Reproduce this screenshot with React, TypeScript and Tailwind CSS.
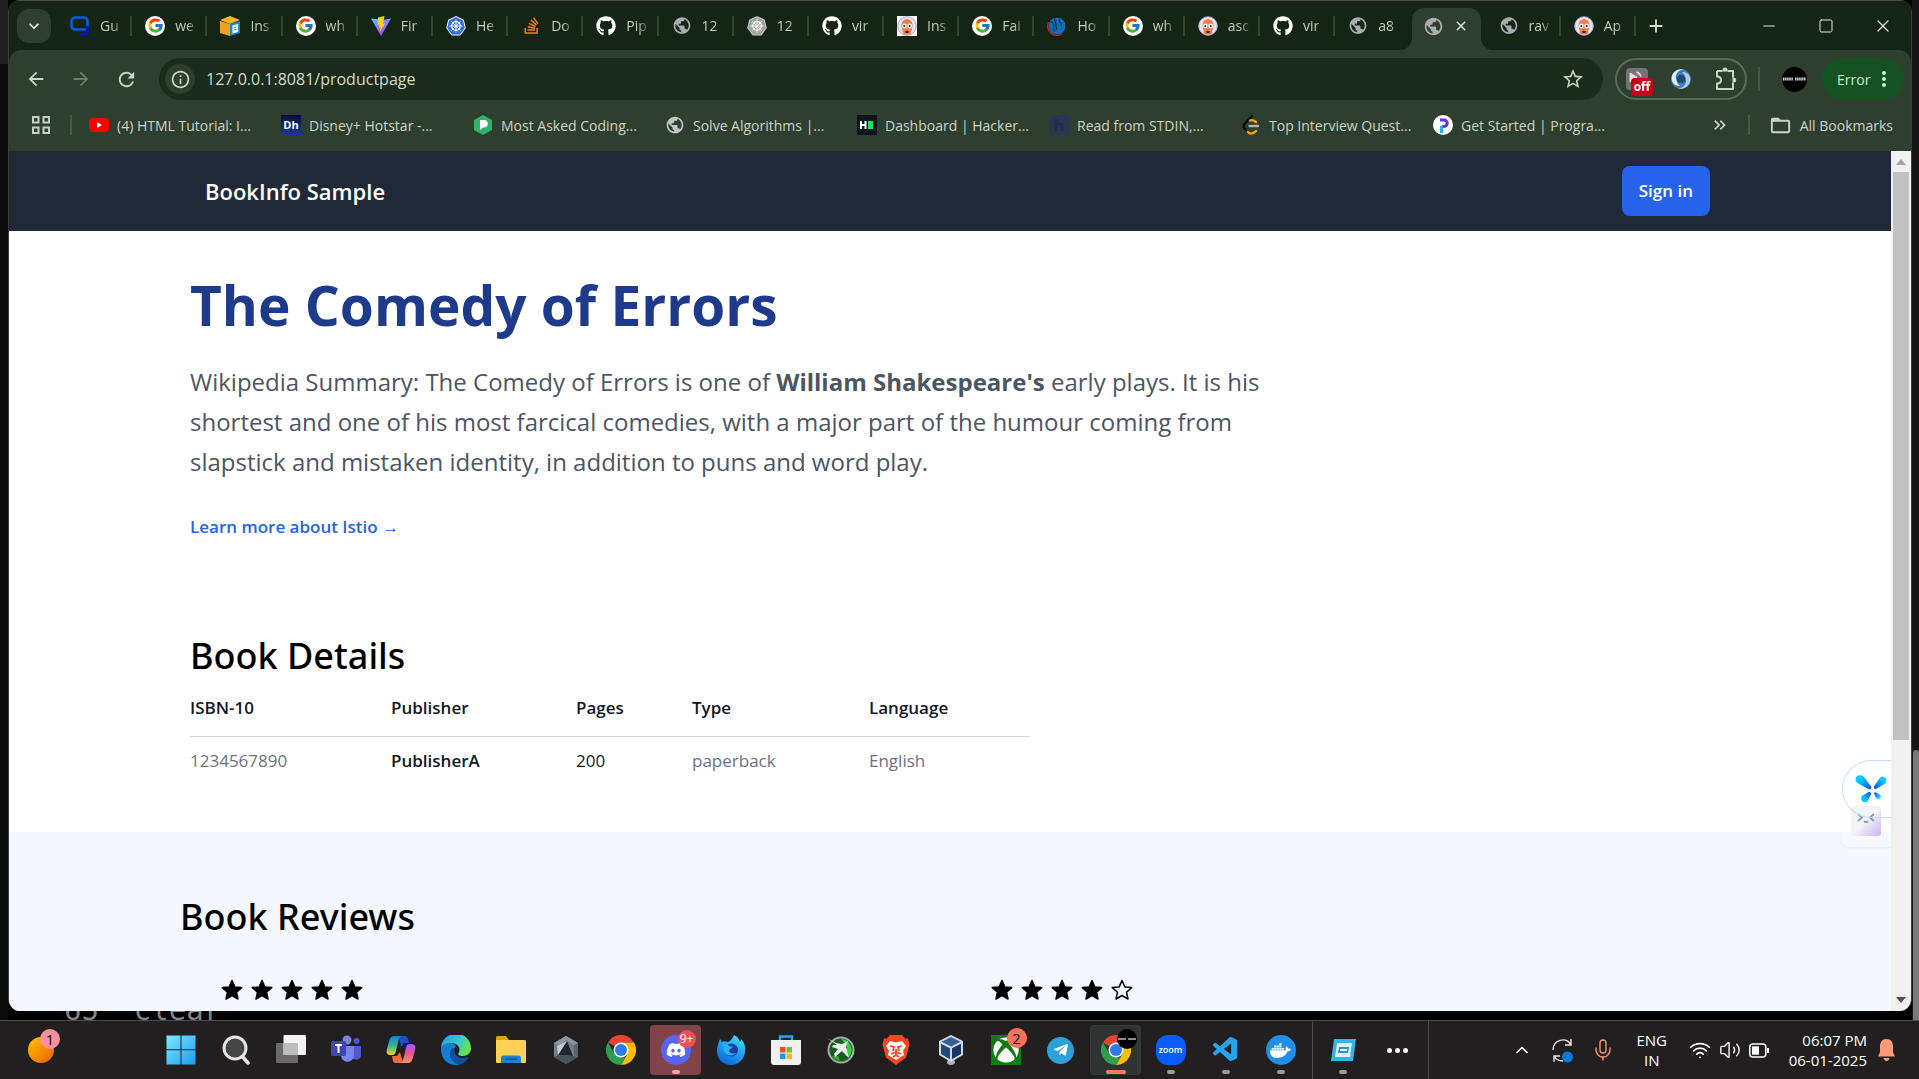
import React, { useId } from 'react';
import { FcGoogle } from 'react-icons/fc';
import { FaGithub, FaStackOverflow, FaDiscord, FaXbox, FaTelegramPlane, FaDocker } from 'react-icons/fa';
import { VscVscode } from 'react-icons/vsc';
import {
  MdPublic, MdArrowBack, MdArrowForward, MdRefresh, MdInfoOutline, MdStarBorder, MdMoreVert,
  MdFolderOpen, MdClose, MdAdd, MdKeyboardArrowDown, MdKeyboardDoubleArrowRight,
} from 'react-icons/md';
import { Wifi, Volume2, Mic, ChevronUp, Minus, Square, X } from 'lucide-react';

type IconFn = () => React.ReactElement;

/* ---------- favicons ---------- */
const Google: IconFn = () => (
  <span className="flex size-5 items-center justify-center rounded-full bg-white"><FcGoogle size={17} /></span>
);
const Github: IconFn = () => <FaGithub size={20} color="#fff" />;
const Globe: IconFn = () => <MdPublic size={21} color="#a9adb0" />;
const Gfg: IconFn = () => (
  <svg width="20" height="20" viewBox="0 0 20 20" fill="none">
    <path d="M17.500 12V5.500C17.500 3 16.500 1.500 14 1.500H5.500C3 1.500 1.500 3 1.500 5.500V10C1.500 12.500 3 13.500 5.500 13.500H16" stroke="#0b5be0" strokeWidth="2.600" />
    <path d="M17.500 10V15C17.500 17.500 16.500 18.500 15 18.500H10" stroke="#0713c8" strokeWidth="2.600" />
  </svg>
);
const Cube: IconFn = () => (
  <svg width="20" height="20" viewBox="0 0 20 20">
    <path d="M0 4 10 0l10 4-10 4z" fill="#f7b32b" />
    <path d="M0 5l10 3v12L0 17z" fill="#eda31e" />
    <path d="M10 8l10-3v12l-10 3z" fill="#1b8ac4" />
    <path d="M12.500 9.500l5.500-1.500v8l-5.500 1.500z" fill="#fff" />
    <path d="M14 11.500l2.500-.6M14 14l2.500-.6" stroke="#1b8ac4" />
  </svg>
);
const Vite: IconFn = () => {
  const id = useId();
  return (
    <svg width="20" height="20" viewBox="0 0 20 20">
      <defs>
        <linearGradient id={id} x1="0" y1="0" x2=".6" y2="1"><stop stopColor="#41d1ff" /><stop offset="1" stopColor="#bd34fe" /></linearGradient>
      </defs>
      <path d="M0 2.500 10 20 20 2.500l-7.500 1.300z" fill={`url(#${id})`} />
      <path d="M13.500 0 7 1.400 6.500 9l2-.4-.6 3.200 1.700-.5-.9 4.700L14.300 7.300l-2.300.4z" fill="#ffcf24" />
    </svg>
  );
};
const KubeWheel = ({ rim, body }: { rim: string; body: string }) => (
  <svg width="20" height="20" viewBox="0 0 20 20">
    <path d="M10 0l7.800 3.700L19.800 12l-5.400 7.500H5.600L.2 12l2-8.300z" fill={rim} />
    <path d="M10 1l7 3.400L18.800 12l-4.900 6.600H6.100L1.200 12 3 4.400z" fill={body} />
    <circle cx="10" cy="10" r="4.300" fill="none" stroke="#fff" strokeWidth="1.200" />
    <path d="M10 3.500v13M3.500 10h13M5.400 5.400l9.200 9.200M14.600 5.400l-9.200 9.200" stroke="#fff" strokeWidth=".9" />
  </svg>
);
const Kube: IconFn = () => <KubeWheel rim="#fff" body="#326ce5" />;
const KubeGray: IconFn = () => <KubeWheel rim="#c8c8c8" body="#a2a2a2" />;
const Stack: IconFn = () => <FaStackOverflow size={19} color="#f48024" />;
const ArgoBody = ({ square }: { square?: boolean }) => (
  <svg width="20" height="20" viewBox="0 0 20 20">
    {square && <path d="M0 0h20v20H0z" fill="#fff" />}
    <circle cx="10" cy="10" r="9.300" fill="#e9e6f2" stroke="#a8a3cf" />
    <path d="M4.500 9a5.500 6 0 0 1 11 0c0 4-1.500 5.500-2 9.500h-7C6 14.500 4.500 13 4.500 9z" fill="#ef7b4d" />
    <circle cx="7.300" cy="10" r="2.400" fill="#fff" /><circle cx="12.700" cy="10" r="2.400" fill="#fff" />
    <circle cx="7.300" cy="10" r="1" fill="#222" /><circle cx="12.700" cy="10" r="1" fill="#222" />
    <path d="M8.500 15h3v2h-3z" fill="#2a1a18" />
  </svg>
);
const ArgoSq: IconFn = () => <ArgoBody square />;
const Argo: IconFn = () => <ArgoBody />;
const Helm: IconFn = () => (
  <svg width="20" height="20" viewBox="0 0 20 20">
    <circle cx="10" cy="10" r="9" fill="#0f6fb4" stroke="#101d28" strokeWidth="1" />
    <path d="M1.500 6.500A9.200 9.200 0 0 0 15 17.800" fill="none" stroke="#c5281f" strokeWidth="1.300" />
    <path d="M3 6c5-1 3 5 4 10M8 2c-2 4 2 4 1 8l1 4M13 3c-3 4 3 3 1 7" fill="none" stroke="#12344c" strokeWidth="1.200" />
  </svg>
);

const tabs: { icon: IconFn; label: string; active?: boolean }[] = [
  { icon: Gfg, label: 'Gu' }, { icon: Google, label: 'we' }, { icon: Cube, label: 'Ins' },
  { icon: Google, label: 'wh' }, { icon: Vite, label: 'Fir' }, { icon: Kube, label: 'He' },
  { icon: Stack, label: 'Do' }, { icon: Github, label: 'Pip' }, { icon: Globe, label: '12' },
  { icon: KubeGray, label: '12' }, { icon: Github, label: 'vir' }, { icon: ArgoSq, label: 'Ins' },
  { icon: Google, label: 'Fai' }, { icon: Helm, label: 'Ho' }, { icon: Google, label: 'wh' },
  { icon: Argo, label: 'asc' }, { icon: Github, label: 'vir' }, { icon: Globe, label: 'a8' },
  { icon: Globe, label: '', active: true }, { icon: Globe, label: 'rav' }, { icon: Argo, label: 'Ap' },
];

const Corner = ({ side }: { side: 'l' | 'r' }) => (
  <svg className={side === 'l' ? 'absolute bottom-0 -left-3' : 'absolute bottom-0 -right-3'} width="12" height="12" viewBox="0 0 12 12">
    <path d={side === 'l' ? 'M12 0v12H0A12 12 0 0 0 12 0z' : 'M0 0v12h12A12 12 0 0 1 0 0z'} fill="#2f3f2f" />
  </svg>
);

function TabStrip() {
  return (
    <div className="flex h-[50px] shrink-0 items-center border-t border-[#4a4a4a] bg-[#142415]">
      <button aria-label="Search tabs" className="ml-2 flex size-[34px] shrink-0 items-center justify-center rounded-xl bg-[#2f3f2f] text-white">
        <MdKeyboardArrowDown size={20} />
      </button>
      <div role="tablist" className="ml-[6px] flex h-full min-w-0 max-w-[1579px] flex-1">
        {tabs.map((t, i) => (
          <div key={i} role="presentation" className="relative flex min-w-0 flex-1 items-center">
            {t.active ? (
              <button role="tab" aria-selected aria-label="Product page" className="relative mt-[7px] mr-[5px] ml-[2px] flex h-[42px] min-w-0 flex-1 items-center justify-between self-start rounded-t-xl bg-[#2f3f2f] pr-3 pb-[6px] pl-[11px]">
                <Globe />
                <MdClose size={16} color="#e3ece0" />
                <Corner side="l" /><Corner side="r" />
              </button>
            ) : (
              <button role="tab" aria-selected={false} className="flex min-w-0 flex-1 items-center gap-[10px] pl-[13px] text-left">
                <span className="flex w-5 shrink-0 justify-center"><t.icon /></span>
                <span className="w-6 whitespace-nowrap text-[14px] leading-5 text-[#c2cfbc] [mask-image:linear-gradient(to_right,#000_50%,transparent)]">{t.label}</span>
              </button>
            )}
            {!t.active && !tabs[i + 1]?.active && <span className="absolute right-0 h-5 w-[2px] bg-[#34452f]" />}
          </div>
        ))}
      </div>
      <button aria-label="New tab" className="ml-[9px] text-[#c9dcc4]"><MdAdd size={22} /></button>
      <div className="ml-auto flex shrink-0 items-center text-[#e6e6e6]">
        <button aria-label="Minimize" className="flex w-[57px] justify-center"><Minus size={18} strokeWidth={1.5} /></button>
        <button aria-label="Maximize" className="flex w-[57px] justify-center"><Square size={16} strokeWidth={1.5} /></button>
        <button aria-label="Close" className="flex w-[57px] justify-center"><X size={20} strokeWidth={1.5} /></button>
      </div>
    </div>
  );
}

function AddressRow() {
  return (
    <div className="flex h-[58px] items-center pr-[7px] pl-4 text-[#c6d8c1]">
      <button aria-label="Back" className="flex w-[45px] shrink-0"><MdArrowBack size={22} /></button>
      <button aria-label="Forward" className="flex w-[45px] shrink-0 text-[#6c7d69]"><MdArrowForward size={22} /></button>
      <button aria-label="Reload" className="flex w-[44px] shrink-0"><MdRefresh size={23} /></button>
      <div className="flex h-[42px] min-w-0 flex-1 items-center rounded-full bg-[#1b2b1c] pr-[18px] pl-[6px]">
        <span className="flex size-[30px] shrink-0 items-center justify-center rounded-full bg-[#2f3f2f]"><MdInfoOutline size={21} /></span>
        <div className="relative ml-[11px] h-6 flex-1">
          <input aria-label="Address" defaultValue="127.0.0.1:8081/productpage" className="w-full bg-transparent text-[16px] leading-6 text-[#d3dccf] outline-none" />
        </div>
        <button aria-label="Bookmark this page"><MdStarBorder size={24} /></button>
      </div>
      <div className="ml-3 flex h-[42px] w-[132px] shrink-0 items-center justify-between rounded-full border-2 border-[#5d6a5a] pr-[7px] pl-[9px]">
        <button aria-label="Blocker, off" className="relative size-[22px] rounded-sm bg-[#737373]">
          <svg viewBox="0 0 22 22" className="size-[22px]"><path d="M4 5l7 4-7 5zM10 4c3 0 5 2 5 5" fill="#ddd" stroke="#ddd" /></svg>
          <span className="absolute top-[10px] left-[5px] h-[18px] w-[22px] rounded bg-[#c8001c] text-[12px] leading-[17px] font-bold text-white">off</span>
        </button>
        <button aria-label="Sync extension">
          <svg width="22" height="22" viewBox="0 0 22 22">
            <circle cx="11" cy="11" r="7" fill="none" stroke="#3d7cc0" strokeWidth="6" />
            <path d="M2 13C0 5 8-1 15 2 9 1 5 6 6 11c.5 3 2 5 4 7-4 0-7-2-8-5z" fill="#dcecf9" />
            <path d="M20 9c2 8-6 14-13 11 6 1 10-4 9-9-.5-3-2-5-4-7 4 0 7 2 8 5z" fill="#a9cdec" />
            <ellipse cx="11" cy="11" rx="3" ry="4" fill="#1f4a80" />
          </svg>
        </button>
        <button aria-label="Extensions">
          <svg width="24" height="26" viewBox="0 0 24 26" fill="none" stroke="#c6d8c1" strokeWidth="2" strokeLinejoin="round">
            <path d="M3 5h5.500M13.500 5H19v6.500M19 16.500V23H3v-5.500c2.500 0 4-1.500 4-3.500s-1.500-3.500-4-3.500V5" />
            <path d="M8.500 5.500V4a2.500 2.500 0 0 1 5 0v1.500zM18.500 11.500h1.200a2.500 2.500 0 0 1 0 5h-1.200z" fill="#c6d8c1" stroke="none" />
          </svg>
        </button>
      </div>
      <span className="ml-[11px] h-6 w-[2px] bg-[#46583f]" />
      <button aria-label="Profile" className="ml-[22px] flex size-[25px] shrink-0 items-center justify-center rounded-full bg-black"><svg width="23" height="4" viewBox="0 0 23 4"><path d="M0 2h10M12 2h11" stroke="#d5d5d5" strokeWidth="3" strokeDasharray="1.500 .6" /></svg></button>
      <button className="ml-[15px] flex h-[42px] w-[82px] shrink-0 items-center justify-between rounded-full bg-[#145223] pr-2 pl-[15px] text-[14px] text-[#cdeccb]">
        Error<MdMoreVert size={24} />
      </button>
    </div>
  );
}

const bookmarks: { label: string; icon: React.ReactElement }[] = [
  { label: '(4) HTML Tutorial: I...', icon: <svg width="20" height="20" viewBox="0 0 20 20"><rect y="3" width="20" height="14" rx="4" fill="#f00" /><path d="M8 7l5 3-5 3z" fill="#fff" /></svg> },
  { label: 'Disney+ Hotstar -...', icon: <span className="flex size-5 items-center justify-center bg-linear-to-b from-[#0a0d3d] to-[#1a3b92] text-[11px] font-bold text-white">Dh</span> },
  { label: 'Most Asked Coding...', icon: <svg width="18" height="20" viewBox="0 0 18 20"><path d="M9 0l9 5v10l-9 5-9-5V5z" fill="#2cb567" /><path d="M6 5h4a3.500 3.500 0 0 1 0 7.500H9L6 15z" fill="#fff" /></svg> },
  { label: 'Solve Algorithms |...', icon: <MdPublic size={20} color="#c0c6c4" /> },
  { label: 'Dashboard | Hacker...', icon: <svg width="20" height="20" viewBox="0 0 20 20"><path d="M0 0h20v20H0z" fill="#0e141e" /><path d="M4 6v8M8.500 6v8M4 10h4.500" stroke="#fff" strokeWidth="2" /><path d="M11 6h5v8h-5z" fill="#1be36a" /></svg> },
  { label: 'Read from STDIN,...', icon: <svg width="20" height="20" viewBox="0 0 20 20"><rect width="20" height="20" rx="2" fill="#2c3454" /><path d="M7 4v12M7 9h6v7" fill="none" stroke="#222a45" strokeWidth="2.500" /></svg> },
  { label: 'Top Interview Quest...', icon: <svg width="18" height="20" viewBox="0 0 18 20" fill="none" strokeWidth="2.400" strokeLinecap="round"><path d="M10 1 2.500 9c-1.500 2-1 3 0 4.500L6 17" stroke="#0a0a0a" /><path d="M6 17c2 2.500 5 2 8-1M8 5.500c2-1 4 0 6 1.500" stroke="#ffa116" /><path d="M7.500 11H16" stroke="#b3b3b3" /></svg> },
  { label: 'Get Started | Progra...', icon: <svg width="20" height="20" viewBox="0 0 20 20"><circle cx="10" cy="10" r="10" fill="#fff" /><path d="M7 5h4a3 3 0 0 1 0 6.500H9" fill="none" stroke="#6a2be8" strokeWidth="3" /><path d="M8.500 11v7" stroke="#1fb3f5" strokeWidth="3" /></svg> },
];

function BookmarkRow() {
  return (
    <div className="flex h-[43px] items-start pt-[6px] text-[14px] text-[#ccd3c8]">
      <div className="flex h-[22px] w-full items-center">
        <button aria-label="Apps" className="ml-[23px] shrink-0">
          <svg width="18" height="18" viewBox="0 0 18 18" fill="none" stroke="#c6cfc2" strokeWidth="2"><path d="M1 1h5.500v5.500H1zM11.500 1H17v5.500h-5.500zM1 11.500h5.500V17H1zM11.500 11.500H17V17h-5.500z" /></svg>
        </button>
        <span className="ml-5 h-5 w-[2px] shrink-0 bg-[#46583f]" />
        <nav aria-label="Bookmarks" className="ml-[17px] flex min-w-0 flex-1 overflow-hidden">
          {bookmarks.map((b) => (
            <a key={b.label} href="#bookmark" className="flex w-48 shrink-0 items-center gap-2 whitespace-nowrap">
              <span className="flex w-5 shrink-0 justify-center">{b.icon}</span>{b.label}
            </a>
          ))}
        </nav>
        <button aria-label="More bookmarks" className="shrink-0"><MdKeyboardDoubleArrowRight size={20} /></button>
        <span className="ml-[18px] h-5 w-[2px] shrink-0 bg-[#46583f]" />
        <button className="mr-[18px] ml-[19px] flex shrink-0 items-center gap-2"><MdFolderOpen size={23} />All Bookmarks</button>
      </div>
    </div>
  );
}

/* ---------- page ---------- */
const Stars = ({ count }: { count: number }) => (
  <div role="img" aria-label={`${count} of 5 stars`} className="flex gap-[6px]">
    {[0, 1, 2, 3, 4].map((n) => (
      <svg key={n} width="24" height="24" viewBox="0 0 24 24" fill={n < count ? '#000' : 'none'} stroke="#000" strokeWidth="1.500" strokeLinejoin="round">
        <path d="M12 2.500l2.800 6.400 6.900.7-5.200 4.600 1.500 6.800L12 17.500l-6 3.500 1.500-6.800-5.200-4.600 6.900-.7z" />
      </svg>
    ))}
  </div>
);

function ProductPage() {
  return (
    <main className="min-w-0 flex-1 overflow-hidden bg-white">
      <nav className="bg-[#1f2937]">
        <div className="mx-auto flex h-20 max-w-[1600px] items-center justify-between px-10">
          <a href="#home" className="pl-[15px] text-[22px] leading-7 font-semibold text-white">BookInfo Sample</a>
          <button className="h-[50px] rounded-lg bg-[#2563eb] px-[17px] text-[17px] font-semibold text-white">Sign in</button>
        </div>
      </nav>
      <section className="mx-auto max-w-[1600px] px-10 pt-[38px]">
        <h1 className="text-[55px] leading-[72px] font-bold text-[#1e3a8a]">The Comedy of Errors</h1>
        <p className="mt-[21px] max-w-[1120px] text-[24px] leading-10 text-[#4b5563]">
          Wikipedia Summary: The Comedy of Errors is one of <b>William Shakespeare's</b> early plays. It is his<br />
          shortest and one of his most farcical comedies, with a major part of the humour coming from<br />
          slapstick and mistaken identity, in addition to puns and word play.
        </p>
        <a href="#istio" className="mt-[30px] inline-block text-[17px] leading-[30px] font-semibold text-[#2563eb]">Learn more about Istio <span aria-hidden="true">→</span></a>
      </section>
      <section className="mx-auto max-w-[1600px] px-10 pt-[89px] pb-[46px]">
        <h2 className="font-['Noto_Sans','Open_Sans',sans-serif] text-[36px] leading-[50px] font-medium text-black">Book Details</h2>
        <table className="mt-1 w-[840px] table-fixed text-left text-[17px] leading-[30px] text-[#111827]">
          <colgroup><col className="w-[201px]" /><col className="w-[185px]" /><col className="w-[116px]" /><col className="w-[177px]" /><col /></colgroup>
          <thead><tr className="border-b border-[#d1d5db]">{['ISBN-10', 'Publisher', 'Pages', 'Type', 'Language'].map((h) => <th key={h} scope="col" className="pt-2 pb-[13px] font-semibold">{h}</th>)}</tr></thead>
          <tbody><tr className="text-[#6b7280]">
            <td className="pt-[9px] pb-[10px]">1234567890</td>
            <td className="pt-[9px] pb-[10px] font-semibold text-[#111827]">PublisherA</td>
            <td className="pt-[9px] pb-[10px] font-medium text-[#111827]">200</td>
            <td className="pt-[9px] pb-[10px]">paperback</td>
            <td className="pt-[9px] pb-[10px]">English</td>
          </tr></tbody>
        </table>
      </section>
      <section className="bg-[#f4f7ff] pt-[60px] pb-20">
        <div className="mx-auto max-w-[1540px]">
          <h2 className="font-['Noto_Sans','Open_Sans',sans-serif] text-[36px] leading-[50px] font-medium text-black">Book Reviews</h2>
          <div className="grid grid-cols-2 pt-9">
            <div className="px-10"><Stars count={5} /></div>
            <div className="px-10"><Stars count={4} /></div>
          </div>
        </div>
      </section>
    </main>
  );
}

const Arrow = ({ down }: { down?: boolean }) => (
  <svg width="10" height="6" viewBox="0 0 10 6"><path d={down ? 'M0 0h10L5 6z' : 'M0 6h10L5 0z'} fill={down ? '#505050' : '#a3a3a3'} /></svg>
);

function SideWidgets() {
  return (
    <div className="absolute top-[609px] right-5 flex flex-col items-end">
      <button aria-label="Assistant" className="relative z-10 flex h-[58px] w-[49px] items-center justify-center rounded-l-full border border-r-0 border-[#c6dbff] pl-2">
        <svg width="32" height="28" viewBox="0 0 32 28">
          <defs>
            <linearGradient id="wing" x1="0" y1="0" x2="1" y2="1"><stop offset=".3" stopColor="#00cdfb" /><stop offset="1" stopColor="#1048ff" /></linearGradient>
            <linearGradient id="wingr" x1="1" y1="0" x2="0" y2="1"><stop offset=".3" stopColor="#00cdfb" /><stop offset="1" stopColor="#1048ff" /></linearGradient>
            <linearGradient id="wingb" x1="0" y1="1" x2="1" y2="0"><stop offset=".3" stopColor="#00cdfb" /><stop offset="1" stopColor="#1048ff" /></linearGradient>
            <linearGradient id="wingc" x1="1" y1="1" x2="0" y2="0"><stop offset=".3" stopColor="#00cdfb" /><stop offset="1" stopColor="#1048ff" /></linearGradient>
          </defs>
          <path d="M1.500 1.500C4-.5 7-.3 9 2l7 9.500c1 2-.6 3.500-2.600 2.600L2.500 8C.3 6.500 0 3.500 1.500 1.500z" fill="url(#wing)" />
          <path d="M30.500 3c-2-1.800-4.500-1.600-6.200.6l-5.200 7.600c-.8 1.800.4 3.200 2.300 2.500L30 8.500c1.700-1.200 1.900-3.800.5-5.500z" fill="url(#wingr)" />
          <path d="M7 26c1.800 2 4.700 1.600 6-.6l3-6.200c.5-1.600-.8-2.700-2.400-2.100l-6 3.500C5.800 22 5.600 24.300 7 26z" fill="url(#wingb)" />
          <path d="M25 23.300c-1.300 1.100-3 .9-4-.5l-1.900-3.900c-.4-1.200.6-2 1.700-1.600l3.800 2.100c1.400.9 1.600 2.700.4 3.900z" fill="url(#wingc)" />
        </svg>
      </button>
      <button aria-label="Companion" className="-mt-[23px] flex h-[52px] w-[50px] items-center rounded-l-lg bg-white/20 pl-[10px] shadow-xs">
        <span className="flex size-[30px] items-start justify-center rounded bg-linear-to-br from-[#f0f4f8] from-50% to-[#cdb0ee] pt-[7px]">
          <svg width="18" height="12" viewBox="0 0 18 12" fill="none" stroke="#9298a4" strokeWidth="1.800"><path d="M1 1l4 3.500L1 8M17 1l-4 3.500L17 8M7 8c1 1.500 3 1.500 4 0" /></svg>
        </span>
      </button>
    </div>
  );
}

/* ---------- taskbar ---------- */
const ChromeIcon = () => (
  <svg width="30" height="30" viewBox="0 0 30 30">
    <path d="M15 15 2 7.500A15 15 0 0 1 28 7.500H15z" fill="#ea4335" />
    <path d="M15 7.500h13A15 15 0 0 1 15 30l6.500-11.200z" fill="#fbbc04" />
    <path d="M15 30A15 15 0 0 1 2 7.500l6.500 11.300L15 22.500h4.400z" fill="#2f9e4f" />
    <circle cx="15" cy="15" r="7.500" fill="#fff" /><circle cx="15" cy="15" r="6" fill="#3079e8" />
  </svg>
);

const apps: { name: string; icon: React.ReactElement; state?: 'run' | 'active' | 'alert' }[] = [
  { name: 'Start', icon: <svg width="30" height="30" viewBox="0 0 30 30"><defs><linearGradient id="win" x1="0" y1="0" x2="1" y2="1"><stop stopColor="#7be9fd" /><stop offset="1" stopColor="#1a9cf5" /></linearGradient></defs><path d="M.5 .5h14v13.800h-14zM15.500 .5h14v13.800h-14zM.5 15.300h14v14.200h-14zM15.500 15.300h14v14.200h-14z" fill="url(#win)" /></svg> },
  { name: 'Search', icon: <svg width="30" height="30" viewBox="0 0 30 30"><path d="M20 20l7 8" stroke="#e3e3e6" strokeWidth="3.500" strokeLinecap="round" /><circle cx="14" cy="13" r="11" fill="#464646" stroke="#e6e6ea" strokeWidth="3" /></svg> },
  { name: 'Task view', icon: <svg width="30" height="30" viewBox="0 0 30 30"><rect x="0" y="8" width="22" height="20" rx="1" fill="#6a6a6a" /><rect x="7.500" width="22.500" height="20" rx="1" fill="#f2f2f2" /><path d="M7.500 8H22v12H7.500z" fill="#bcbcbc" /></svg> },
  { name: 'Teams', icon: <svg width="30" height="30" viewBox="0 0 30 30"><circle cx="25.500" cy="6" r="3" fill="#5059c9" /><path d="M20 11h10v9c0 5-6 6-9 3z" fill="#5059c9" /><circle cx="16" cy="5" r="4.500" fill="#7b83eb" /><path d="M10 11h13v9c0 9-13 9-13 0z" fill="#7b83eb" /><rect y="6" width="15" height="15" rx="1.500" fill="#4048b0" /><path d="M4 10h7M7.500 10v8" stroke="#fff" strokeWidth="2" /></svg> },
  { name: 'Copilot', icon: <svg width="30" height="30" viewBox="0 0 30 30"><defs><linearGradient id="cpa" x1="0" y1="0" x2="0" y2="1"><stop stopColor="#1b7be8" /><stop offset=".5" stopColor="#2fb890" /><stop offset="1" stopColor="#f0d21e" /></linearGradient><linearGradient id="cpb" x1="0" y1="0" x2="0" y2="1"><stop stopColor="#a05bf0" /><stop offset=".5" stopColor="#ee4f9a" /><stop offset="1" stopColor="#fb9a4b" /></linearGradient></defs><path d="M13 1h6c3 0 3 2 4 7h-5l-3 4z" fill="#1550c8" /><path d="M17 28h-7c-3 0-3-2-4-7h5l3-4z" fill="#f46a3a" /><path d="M8 1h8c-3 0-3.500 5-6 15-1 4-2 4-5 4-4 0-5-2-4-6l2.500-9C4.500 2 6 1 8 1z" fill="url(#cpa)" /><path d="M22 28h-8c3 0 3.500-5 6-15 1-4 2-4 5-4 4 0 5 2 4 6l-2.500 9c-1 3-2.500 4-4.500 4z" fill="url(#cpb)" /></svg> },
  { name: 'Edge', icon: <svg width="30" height="30" viewBox="0 0 30 30"><defs><linearGradient id="eg" x1="0" y1="0" x2="1" y2=".5"><stop stopColor="#1f9be0" /><stop offset=".6" stopColor="#34c8d8" /><stop offset="1" stopColor="#6be34b" /></linearGradient></defs><path d="M0 14c3-7 12-8 15-3l-2 3c0 8 6 12 14 8-3 6-8 8-13 8A15 15 0 0 1 0 14z" fill="#1280d2" /><path d="M0 14A15 15 0 0 1 30 13c.3 5-3.500 8-8 8-4 0-5.500-1.500-4.500-3 2-3 1-8-4-9.500C8 7 2 9 0 14z" fill="url(#eg)" /><path d="M11 13c-5 7 0 16 8 16.500 4-1 7-4 8.500-7.500-8 3-14-1-14-6 0-2 0-3-2.500-3z" fill="#0c4f9c" /></svg> },
  { name: 'File Explorer', icon: <svg width="30" height="30" viewBox="0 0 30 30"><path d="M0 2.500C0 1.500.5 1 1.500 1H10l3 4v4H0z" fill="#e0a012" /><rect y="5" width="30" height="23" rx="1" fill="#ffd055" /><path d="M5 28v-5c0-1.500 1-2.500 2.500-2.500h15c1.500 0 2.500 1 2.500 2.500v5z" fill="#1583cf" /><path d="M9 24h12" stroke="#0d5ea0" strokeWidth="2" /></svg> },
  { name: 'Cursor', icon: <svg width="28" height="28" viewBox="0 0 28 28"><path d="M14 0l12 7v14l-12 7-12-7V7z" fill="#747d85" /><path d="M14 0l12 7-4 2-8-5-7 5-5-2z" fill="#8d969e" /><path d="M26 7v14l-4-2V9z" fill="#5b646b" /><path d="M15 5l6 15-15-1z" fill="#20262b" /><path d="M15 5 6 19l-1-9z" fill="#c3cad0" /><path d="M2 21l4-2 15 1 5 1-12 7z" fill="#4b535a" /></svg> },
  { name: 'Chrome', icon: <ChromeIcon /> },
  { name: 'Discord', state: 'alert', icon: <span className="relative flex size-[30px] items-center justify-center rounded-full bg-[#5865f2]"><FaDiscord size={20} color="#fff" /><span className="absolute -top-[5px] left-[17px] flex size-[18px] items-center justify-center rounded-full bg-[#ee5057] text-[12px] text-white">9+</span></span> },
  { name: 'Firefox Developer Edition', icon: <svg width="30" height="30" viewBox="0 0 30 30"><defs><linearGradient id="ff" x1=".8" y1="0" x2=".3" y2="1"><stop stopColor="#3be0f5" /><stop offset=".5" stopColor="#1ea0f2" /><stop offset="1" stopColor="#0a64d8" /></linearGradient></defs><path d="M18 0c4 2 5 4 6 7 1-1 1-2 1-3 4 4 4.500 8 4 13-1 8-7 13-14 13S1 25 1 16C1 11 3 7 4 4c1 1 1 2 1.500 3 2-1 4-1 6 0 2 0 5-3 6.500-7z" fill="url(#ff)" /><circle cx="15.500" cy="15" r="6.500" fill="#233a9c" /><path d="M6 9c3-1 5 0 7 2l4 1-4 3c0 3 3 4 7 3-3 4-10 3-12-2-.8-2-.5-5-2-7z" fill="#25b3f4" /></svg> },
  { name: 'Microsoft Store', icon: <svg width="30" height="30" viewBox="0 0 30 30"><path d="M9 7V1.500h12V7" fill="none" stroke="#28a5e5" strokeWidth="2.500" /><path d="M0 5h30v22a3 3 0 0 1-3 3H3a3 3 0 0 1-3-3z" fill="#f0f0f0" /><path d="M9 12h5.500v5.500H9z" fill="#e8502a" /><path d="M15.500 12H21v5.500h-5.500z" fill="#7db928" /><path d="M9 18.500h5.500V24H9z" fill="#1b9fe3" /><path d="M15.500 18.500H21V24h-5.500z" fill="#fdb813" /></svg> },
  { name: 'Rocket tool', icon: <svg width="28" height="28" viewBox="0 0 28 28"><circle cx="14" cy="14" r="12.500" fill="#1b5a24" stroke="#a6afa6" strokeWidth="2" /><path d="M14 3a11 11 0 0 1 8 18l-4-2 2-10z" fill="#35cf3d" /><path d="M5 20a11 11 0 0 0 8 5l-2-5z" fill="#2cae35" /><path d="M0 2l9 5 6 1 6-3-2 6 3 11-7-7-7 6-1-3 4-5-6-2 1-2 4 0z" fill="#e8ece8" /></svg> },
  { name: 'Brave', icon: <svg width="28" height="30" viewBox="0 0 28 30"><path d="M8 0h12l3 3.500h3l1.500 6-3.500 13L14 30 4 22.500.5 9.500 2 3.500h3z" fill="#fb4420" /><path d="M8 6l6 1.500L20 6l4 5-3 5 1 4-8 5-8-5 1-4-3-5z" fill="#fff" /><path d="M8 11l4 1-1 4M20 11l-4 1 1 4M14 14v6M9 19l5-2 5 2M11 22l3-2 3 2" fill="none" stroke="#fb4420" strokeWidth="1.800" /></svg> },
  { name: 'VirtualBox', icon: <svg width="26" height="30" viewBox="0 0 26 30"><path d="M13 24c5 0 6 6 0 6s-5-6 0-6z" fill="#a5afc0" /><path d="M13 0l12 6v14l-12 7-12-7V6z" fill="#cdd9e8" /><path d="M13 2l9.500 4.800L13 11.500 3.500 6.800z" fill="#3c5f92" /><path d="M3 8.800l9 4.500v11L3 19z" fill="#244877" /><path d="M23 8.800l-9 4.500v11l9-5.300z" fill="#173560" /></svg> },
  { name: 'Xbox', icon: <span className="relative flex size-[30px] items-center justify-center bg-[#107c10]"><FaXbox size={26} color="#fff" /><span className="absolute -top-[7px] left-4 flex size-5 items-center justify-center rounded-full bg-[#f8735b] text-[14px] text-black">2</span></span> },
  { name: 'Telegram', icon: <span className="flex size-[27px] items-center justify-center rounded-full bg-[#2ba0da]"><FaTelegramPlane size={16} color="#fff" /></span> },
  { name: 'Chrome, profile window', state: 'active', icon: <span className="relative flex"><ChromeIcon /><span className="absolute -top-[6px] left-4 flex size-5 items-center justify-center rounded-full bg-black"><svg width="18" height="4" viewBox="0 0 18 4"><path d="M0 2h8M10 2h8" stroke="#8d8d8d" strokeWidth="2" /></svg></span></span> },
  { name: 'Zoom', state: 'run', icon: <span className="flex size-[30px] items-center justify-center rounded-xl bg-[#0b5cff] text-[9px] font-semibold text-white">zoom</span> },
  { name: 'Visual Studio Code', state: 'run', icon: <VscVscode size={30} color="#27a3ee" /> },
  { name: 'Docker', state: 'run', icon: <span className="flex size-[30px] items-center justify-center rounded-full bg-[#1d8fec]"><FaDocker size={21} color="#fff" /></span> },
];

function Taskbar() {
  return (
    <footer className="flex h-[59px] shrink-0 items-center border-t border-[#4c4c4c] bg-[#211f20] text-white">
      <button aria-label="Widgets, 1 new" className="relative mb-2 ml-[28px] h-[34px] w-[32px] shrink-0">
        <span className="absolute bottom-0 left-0 size-[26px] rounded-full bg-linear-to-br from-[#ffc400] to-[#e85a00]" />
        <span className="absolute top-0 left-3 flex size-5 items-center justify-center rounded-full bg-[#ff8f9c] text-[14px] text-black">1</span>
      </button>
      <nav aria-label="Taskbar" className="ml-[93px] flex">
        {apps.map((a) => (
          <button
            key={a.name}
            aria-label={a.name}
            className={
              a.state === 'alert'
                ? 'relative mx-[2px] flex h-[50px] w-[51px] items-center justify-center rounded bg-[#80434a]'
                : a.state === 'active'
                  ? 'relative mx-[2px] flex h-[50px] w-[51px] items-center justify-center rounded border border-r-4 border-[#353a38] bg-[#2f3432] pl-[3px]'
                  : 'relative flex h-[50px] w-[55px] items-center justify-center'
            }
          >
            {a.icon}
            {a.state === 'run' && <span className="absolute bottom-[1px] h-1 w-2 rounded-full bg-[#9b9b9b]" />}
            {a.state === 'alert' && <span className="absolute bottom-[1px] h-1 w-2 rounded-full bg-[#ff9da6]" />}
            {a.state === 'active' && <span className="absolute bottom-0 h-1 w-5 rounded-full bg-[#f47b62]" />}
          </button>
        ))}
      </nav>
      <div className="ml-1 flex h-full w-[117px] items-center border-x border-[#4b4b4b]">
        <button aria-label="Terminal window" className="relative flex h-[50px] w-[60px] items-center justify-center">
          <svg width="26" height="22" viewBox="0 0 26 22"><path d="M4 0h22l-3 22H1z" fill="#35b4e8" /><path d="M7 4h15l-2 14H5z" fill="#d8f3fd" /><path d="M9 8h10l-1 6H8z" fill="#2196d3" /><path d="M10 10h7v2h-7z" fill="#fff" /></svg>
          <span className="absolute bottom-[1px] h-1 w-2 rounded-full bg-[#9b9b9b]" />
        </button>
        <button aria-label="More" className="flex w-[48px] items-center justify-center gap-[3px]">
          <i className="size-[5px] rounded-full bg-white" /><i className="size-[5px] rounded-full bg-white" /><i className="size-[5px] rounded-full bg-white" />
        </button>
      </div>
      <div className="ml-auto flex items-center pr-[24px] text-[15px] leading-5">
        <button aria-label="Hidden icons" className="mr-5"><ChevronUp size={20} /></button>
        <button aria-label="Sync" className="mr-[17px]">
          <svg width="22" height="26" viewBox="0 0 22 26" fill="none" stroke="#e8e8e8" strokeWidth="1.400"><path d="M1 13C1 3 14-1 19 8M19 2v6h-6M2 25v-6h6M2 19c2 4 5 5 9 5" /><circle cx="15.500" cy="20" r="5.500" fill="#0a78d7" stroke="none" /></svg>
        </button>
        <button aria-label="Microphone" className="mr-5 text-[#f0946f]"><Mic size={24} strokeWidth={1.400} /></button>
        <button className="mr-5 w-[34px] text-center">ENG<br />IN</button>
        <button aria-label="Network, volume and battery" className="flex items-center gap-2">
          <Wifi size={22} strokeWidth={2} />
          <Volume2 size={22} strokeWidth={1.500} />
          <svg width="20" height="15" viewBox="0 0 20 15"><rect x=".8" y="1" width="16" height="13" rx="3" fill="none" stroke="#fff" strokeWidth="1.500" /><rect x="3" y="3.300" width="7" height="8.400" fill="#fff" /><path d="M19 5v5" stroke="#fff" strokeWidth="2" /></svg>
        </button>
        <button className="ml-5 text-right whitespace-nowrap">06:07 PM<br />06-01-2025</button>
        <button aria-label="Notifications" className="ml-[11px]">
          <svg width="17" height="24" viewBox="0 0 17 24" fill="#f99a78"><path d="M8.500 1C4 1 2 4.500 2 8v6L0 18.500h17L15 14V8c0-3.500-2-7-6.500-7zM5.500 20h6c-.5 4-5.500 4-6 0z" /></svg>
        </button>
      </div>
    </footer>
  );
}

export default function App() {
  return (
    <div className="flex h-screen flex-col overflow-hidden bg-black font-['Open_Sans','Noto_Sans',sans-serif]">
      <div className="flex min-h-0 flex-1">
        <div className="flex w-2 shrink-0 flex-col bg-[#0b0b0b]"><div className="h-16 bg-[#202020]" /></div>
        <div className="flex min-w-0 flex-1 flex-col">
          <div className="flex min-h-0 flex-1 flex-col overflow-hidden rounded-xl border-x border-[#3c3c3c] bg-[#142415]">
            <TabStrip />
            <header className="shrink-0 rounded-t-xl bg-[#2f3f2f]">
              <AddressRow />
              <BookmarkRow />
            </header>
            <div className="relative flex min-h-0 flex-1">
              <ProductPage />
              <SideWidgets />
              <div className="flex w-5 shrink-0 flex-col items-center bg-[#f0f0f0] px-[2px] py-2">
                <Arrow />
                <div className="mt-[7px] min-h-0 w-full flex-[563] bg-[#c1c1c1]" />
                <div className="flex-[255]" />
                <Arrow down />
              </div>
            </div>
          </div>
          <div className="flex h-[9px] shrink-0 items-end overflow-hidden pl-[56px]">
            <pre className="font-['DejaVu_Sans_Mono',monospace] text-[29px] leading-5 text-[#858585]">65  clear</pre>
          </div>
        </div>
        <div className="flex w-[7px] shrink-0 flex-col items-end bg-[#161616]">
          <div className="h-[750px] shrink-0" />
          <div className="w-[6px] flex-1 rounded-t bg-[#7a7878]" />
        </div>
      </div>
      <Taskbar />
    </div>
  );
}
